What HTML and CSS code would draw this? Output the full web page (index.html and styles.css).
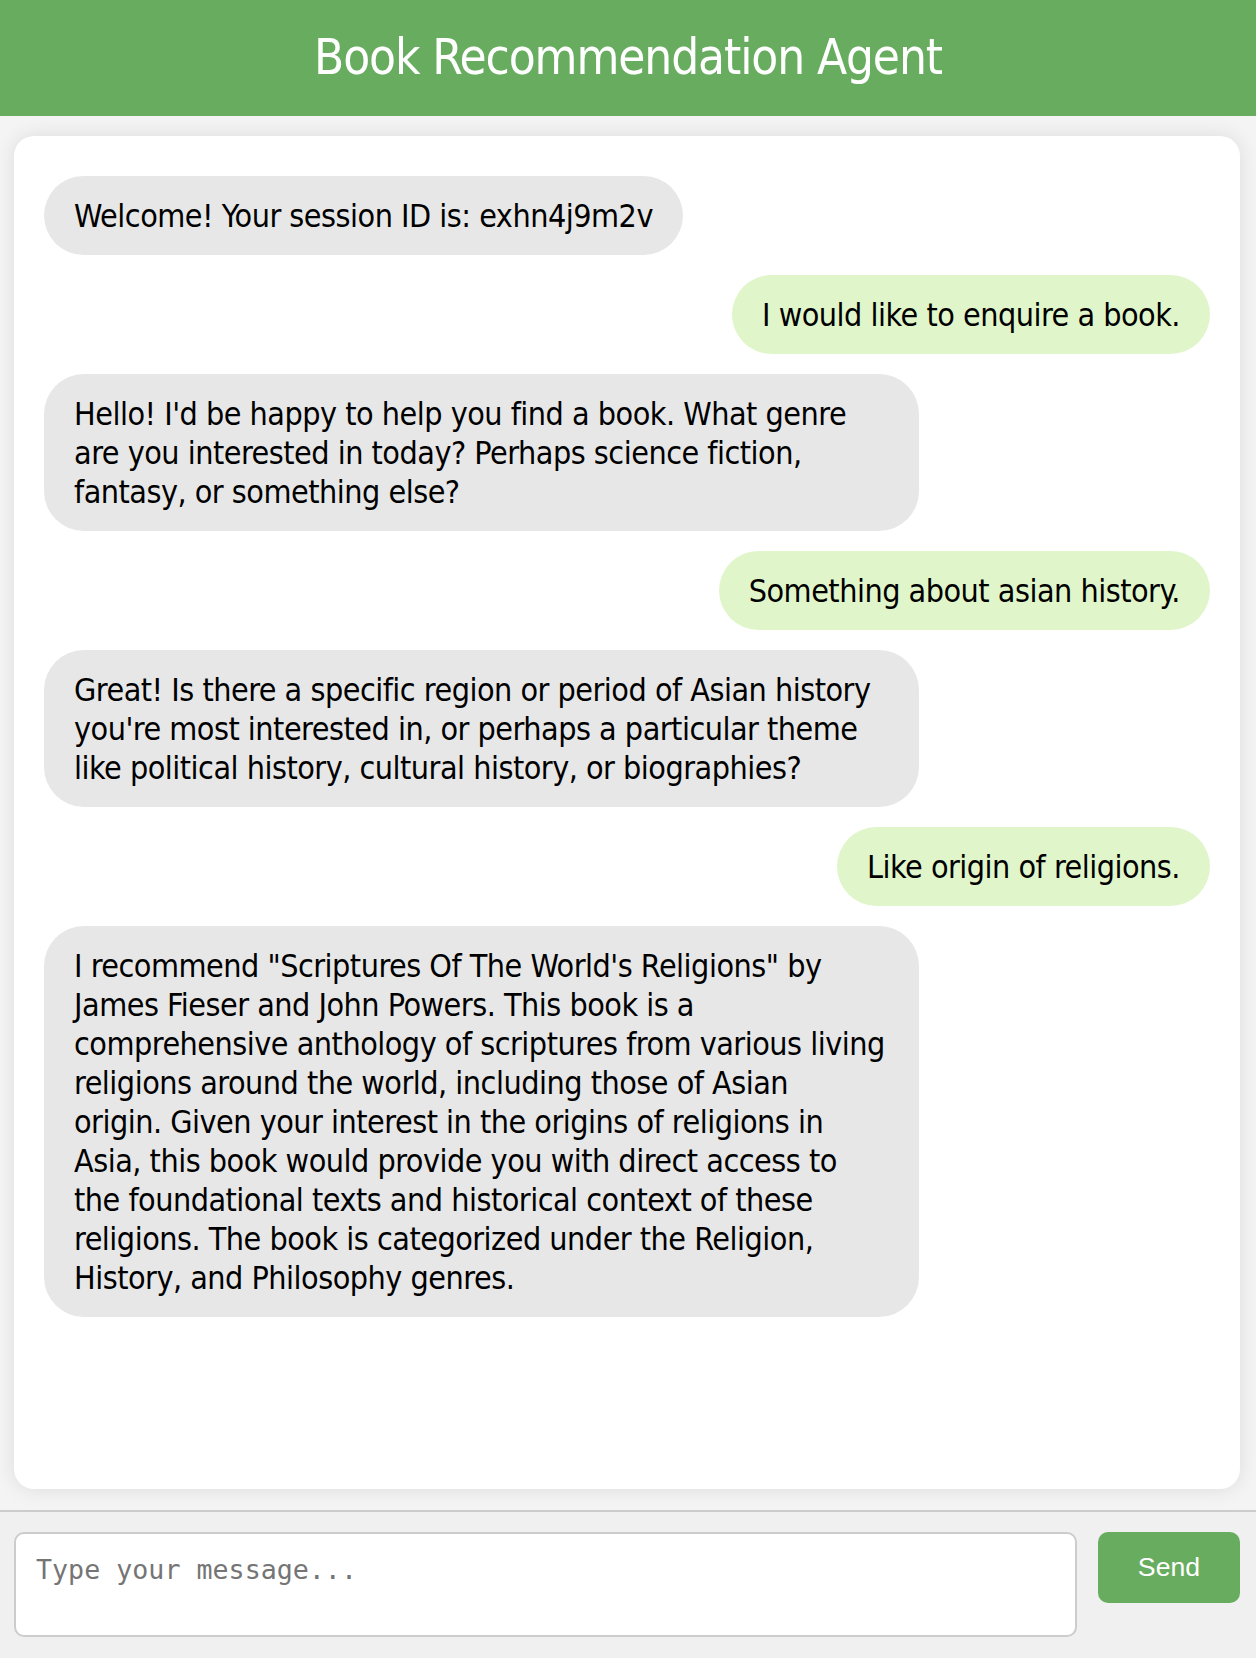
FILE: index.html
```html
<!DOCTYPE html>
<html lang="en">
<head>
<meta charset="utf-8">
<title>Book Recommendation Agent</title>
<link rel="stylesheet" href="styles.css">
</head>
<body>
<header class="app-header"><h1 class="app-title">Book Recommendation Agent</h1></header>
<main class="chat">
  <div class="msg msg-bot">Welcome! Your session ID is: exhn4j9m2v</div>
  <div class="msg msg-user">I would like to enquire a book.</div>
  <div class="msg msg-bot">Hello! I'd be happy to help you find a book. What genre are you interested in today? Perhaps science fiction, fantasy, or something else?</div>
  <div class="msg msg-user">Something about asian history.</div>
  <div class="msg msg-bot">Great! Is there a specific region or period of Asian history you're most interested in, or perhaps a particular theme like political history, cultural history, or biographies?</div>
  <div class="msg msg-user">Like origin of religions.</div>
  <div class="msg msg-bot">I recommend "Scriptures Of The World's Religions" by James Fieser and John Powers. This book is a comprehensive anthology of scriptures from various living religions around the world, including those of Asian<br>origin. Given your interest in the origins of religions in Asia, this book would provide you with direct access to the foundational texts and historical context of these religions. The book is categorized under the Religion, History, and Philosophy genres.</div>
</main>
<footer class="composer">
  <textarea class="composer-input" placeholder="Type your message..."></textarea>
  <button class="send-btn" type="button">Send</button>
</footer>
</body>
</html>
```
FILE: styles.css
```css
html, body {
  height: 100%;
}
body {
  margin: 0;
  display: flex;
  flex-direction: column;
  height: 100vh;
  background: #f4f4f4;
  font-family: "DejaVu Sans Condensed", "DejaVu Sans", sans-serif;
  font-stretch: condensed;
  color: #000;
}
.app-header {
  background: #68ad5f;
  color: #fff;
  height: 116px;
  flex: none;
  display: flex;
  align-items: center;
  justify-content: center;
}
.app-title {
  margin: 0;
  font-size: 49px;
  font-weight: normal;
  line-height: 58px;
  letter-spacing: -1.1px;
}
.chat {
  flex: 1;
  min-height: 0;
  margin: 20px 16px 21px 14px;
  background: #fff;
  border-radius: 20px;
  box-shadow: 0 0 20px rgba(0, 0, 0, 0.1);
  padding: 40px 30px;
  display: flex;
  flex-direction: column;
  gap: 20px;
  overflow: hidden;
}
.msg {
  max-width: 75%;
  box-sizing: border-box;
  padding: 21px 30px 19px;
  border-radius: 40px;
  font-size: 32px;
  line-height: 39px;
  letter-spacing: -0.5px;
}
.msg-bot {
  align-self: flex-start;
  background: #e7e7e7;
}
.msg-user {
  align-self: flex-end;
  background: #e0f6ca;
}
.composer {
  flex: none;
  border-top: 2px solid #cccccc;
  background: #f0f0f0;
  padding: 20px 16px 21px 14px;
  display: flex;
  gap: 21px;
  align-items: flex-start;
}
.composer-input {
  flex: 1;
  height: 105px;
  box-sizing: border-box;
  padding: 20px;
  border: 2px solid #cccccc;
  border-radius: 10px;
  font-family: "DejaVu Sans Mono", monospace;
  font-size: 26.67px;
  resize: none;
  background: #fff;
}
.composer-input::placeholder {
  color: #757575;
}
.send-btn {
  flex: none;
  width: 142px;
  height: 71px;
  background: #68ad5f;
  color: #fff;
  border: none;
  border-radius: 10px;
  font-family: "Liberation Sans", Arial, sans-serif;
  font-size: 26.67px;
}
```
